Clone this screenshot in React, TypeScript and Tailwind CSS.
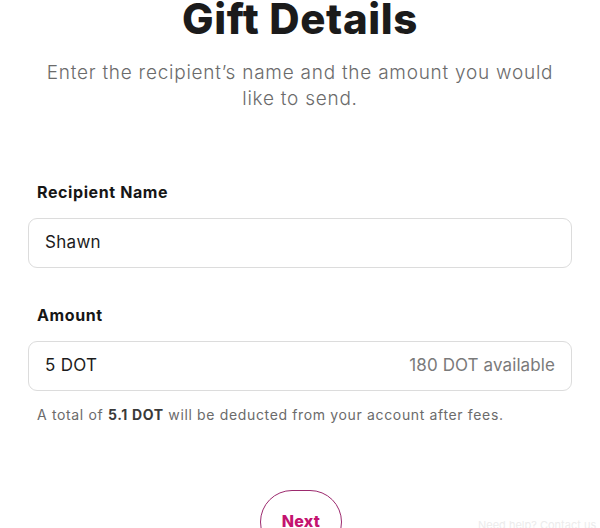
import React from "react";

const font = { fontFamily: "Inter, 'Liberation Sans', sans-serif" };

interface FieldProps {
  label: string;
  value: string;
  hint?: string;
}

const Field: React.FC<FieldProps> = ({ label, value, hint }) => {
  return (
    <div className="flex flex-col">
      <label className="pl-[9px] text-[16px] leading-[20px] font-bold text-[#161616] tracking-[0.6px]">{label}</label>
      <div className="mt-[16px] h-[50px] rounded-[9px] border border-[#dcdcdc] flex items-center justify-between pl-[16px] pr-[16px]">
        <span className="text-[17px] text-[#1c1c1c] tracking-[0.3px]">{value}</span>
        {hint && <span className="text-[17px] text-[#7a7a7a] tracking-[0.1px]">{hint}</span>}
      </div>
    </div>
  );
};

export default function App() {
  return (
    <div className="w-[600px] h-[528px] overflow-hidden bg-white relative" style={font}>
      <div className="flex flex-col px-[28px]">
        <h1 className="mt-[-2px] text-center text-[42px] leading-[42px] font-extrabold text-[#1b1b1b] tracking-[0.6px]">
          Gift Details
        </h1>
        <p className="mt-[20px] text-center text-[19px] leading-[26px] text-[#6b6b6b] font-light tracking-[0.75px]">
          Enter the recipient’s name and the amount you would
          <br />
          like to send.
        </p>

        <div className="mt-[70px]">
          <Field label="Recipient Name" value="Shawn" />
        </div>
        <div className="mt-[37px]">
          <Field label="Amount" value="5 DOT" hint="180 DOT available" />
        </div>
        <p className="mt-[14px] pl-[9px] text-[14px] leading-[20px] text-[#6b6b6b] tracking-[0.65px]">
          A total of <span className="font-bold text-[#3a3a3a]">5.1 DOT</span> will be deducted from your account after fees.
        </p>

        <div className="mt-[65px] flex justify-center">
          <button className="ml-[2px] w-[82px] h-[64px] rounded-[32px] border-[1.5px] border-[#9c2a6e] flex items-start justify-center pt-[18px] text-[16px] font-extrabold text-[#c4136f] tracking-[0.3px]">
            Next
          </button>
        </div>
      </div>
      <span className="absolute left-[478px] top-[517px] text-[11px] text-[#ececec]">Need help? Contact us</span>
    </div>
  );
}
